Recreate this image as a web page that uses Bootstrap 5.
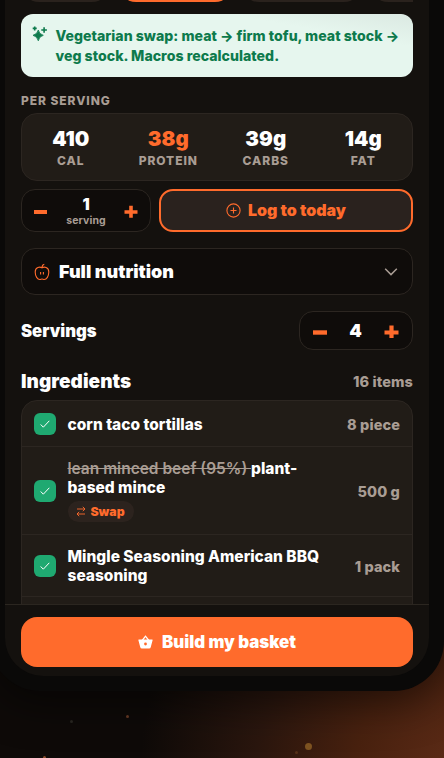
<!DOCTYPE html>
<html lang="en">
<head>
<meta charset="utf-8">
<meta name="viewport" content="width=device-width, initial-scale=1">
<title>Recipe</title>
<link href="https://cdn.jsdelivr.net/npm/bootstrap@5.3.0/dist/css/bootstrap.min.css" rel="stylesheet">
<style>
:root{--acc:#ff6b2c;--line:#2c2621;--mut:#a99d94}
body{font-family:Inter,sans-serif;height:758px;color:#fff;line-height:1.2;
background:radial-gradient(circle 330px at 470px 775px,#602d18 0,#48210f 35%,#2a160e 65%,rgba(14,10,8,0) 100%),#0e0a08}
.phone{width:454px;height:691px;margin-left:-10px;padding:0 15px 15px;background:#0a0908;border-radius:0 0 50px 50px;box-shadow:0 12px 40px rgba(0,0,0,.5)}
.screen{height:676px;background:#14110e;border-radius:0 0 38px 38px}
.scroller{height:604px;padding:0 16px}
.chips{height:13.5px;gap:8px}
.chip{height:20px;margin-top:-18px;border-radius:0 0 18px 18px;background:#2a221d;flex:none}
.chip.on{background:var(--acc)}
.note{height:63.5px;border-radius:12px;background:linear-gradient(190deg,#dbe9e2 0,#e6f6ee 25%);color:#0d7a4c;font-size:14.100px;font-weight:800;line-height:20px;padding:12px 8px 0 11px;gap:7.5px;letter-spacing:.03px}
.cap{font-size:12px;font-weight:800;letter-spacing:.93px;color:var(--mut);line-height:15px}
.panel{background:#211c17;border:1px solid var(--line);border-radius:16px}
.well{background:#0f0c0a;border:1px solid var(--line);border-radius:14px}
.macros{height:68px}
.macros .num{font-size:20.500px;font-weight:900;line-height:24px;margin-bottom:2px;padding-top:0}
.acc{color:var(--acc)}
.actions{height:43px;margin-top:8px;gap:8px}
.per{width:130px;padding:0 12px}
.per .q{font-size:16px;font-weight:900;line-height:17px;padding-top:2px}
.per .u{font-size:10.500px;font-weight:700;line-height:14px;letter-spacing:.1px;color:var(--mut);padding-top:1px}
.log{border:2px solid var(--acc);border-radius:14px;background:#2a221e;color:var(--acc);font-size:16px;font-weight:900;gap:7px}
.log span{margin-top:-1px}
.full{height:47px;margin-top:16px;padding:0 14px 0 11px;font-size:18px;font-weight:900}
.srv{height:39px;margin-top:16px;font-size:16.700px;font-weight:900}
.srv>span{padding-top:1px}
.step{width:114px;height:39px;padding:0 13px;font-size:18px}
.ing{height:24px;margin-top:19.5px}
.ing h2{font-size:19px;font-weight:900;line-height:24px;letter-spacing:.05px}
.amt{font-size:14.500px;font-weight:800;letter-spacing:.1px;color:var(--mut)}
.item .amt{padding-top:1px}
.items{height:230px;margin-top:6.5px;border-radius:16px 16px 0 0}
.item{border-bottom:1px solid var(--line);padding:0 12px 0 11.5px;font-size:15.500px;font-weight:800;line-height:19px}
.h-a{height:46px;padding-top:1px}.h-b{height:87.5px;padding-top:1px}.h-c{height:62px;padding-top:1px}
.tick{width:22px;height:22px;border-radius:6px;background:#1fa971;flex:none;margin-right:12px}
.name{width:260px}
.old{text-decoration:line-through;font-weight:600;color:var(--mut)}
.swap{height:21px;width:66px;border-radius:11px;background:#2c231e;color:var(--acc);font-size:12.300px;font-weight:900;margin-top:4px;gap:4px}
.foot{height:72px;border-top:1px solid #2b2620;padding:12px 16px 0}
.build{height:50px;border-radius:16px;background:var(--acc);color:#fff;font-size:16.900px;font-weight:900;gap:9px}
.build span{padding-top:1px}
svg{flex:none;display:block}
.dust{position:absolute;border-radius:50%}
</style>
<script src="https://cdn.jsdelivr.net/npm/bootstrap@5.3.0/dist/js/bootstrap.bundle.min.js"></script>
</head>
<body class="overflow-hidden position-relative">
<div class="phone">
<div class="screen overflow-hidden">
<main class="scroller overflow-hidden">
<div class="chips d-flex overflow-hidden"><div class="chip" style="width:89px"></div><div class="chip on" style="width:115px"></div><div class="chip" style="width:121px"></div><div class="chip" style="width:80px"></div></div>
<div class="note d-flex">
<svg width="16" height="16" viewBox="0 0 16 16" fill="#0d7a4c" stroke="#0d7a4c"><path stroke-width=".8" d="M6.300 4Q7.100 8.200 11.300 9.300Q7.100 10.400 6.300 14.800Q5.300 10.400 1 9.300Q5.300 8.200 6.300 4Z"/><path d="M12.100 1.200v5.600M9.300 4h5.600M2.700.4v4M.7 2.400h4" stroke-width="1.600"/></svg>
<div class="note-text text-nowrap">Vegetarian swap: meat → firm tofu, meat stock →<br>veg stock. Macros recalculated.</div>
</div>
<div class="cap" style="margin:16px 0 5px">PER SERVING</div>
<div class="panel macros d-flex text-center align-items-center px-0">
<div class="col"><div class="num">410</div><div class="cap">CAL</div></div>
<div class="col"><div class="num acc">38g</div><div class="cap">PROTEIN</div></div>
<div class="col"><div class="num">39g</div><div class="cap">CARBS</div></div>
<div class="col"><div class="num">14g</div><div class="cap">FAT</div></div>
</div>
<div class="actions d-flex">
<div class="well per d-flex align-items-center justify-content-between">
<svg width="14" height="14" viewBox="0 0 14 14"><path d="M0 8h13" stroke="#ff6b2c" stroke-width="4"/></svg>
<div class="text-center"><div class="q">1</div><div class="u">serving</div></div>
<svg width="14" height="14" viewBox="0 0 14 14"><path d="M.5 8h13M7 1.800v12" stroke="#ff6b2c" stroke-width="3.600"/></svg>
</div>
<button class="btn log flex-fill d-flex align-items-center justify-content-center p-0"><svg width="15" height="15" viewBox="0 0 15 15" fill="none" stroke="#ff6b2c" stroke-width="1.100"><circle cx="7.500" cy="7.500" r="6.600"/><path d="M7.500 4.500v6M4.500 7.500h6"/></svg><span>Log to today</span></button>
</div>
<div class="well full d-flex align-items-center">
<svg class="me-2" width="18" height="18" viewBox="-.5 0 18 18" fill="none" stroke="#ff6b2c" stroke-width="1.100"><path d="M8.500 4.800C6.500 3.600 1.700 3.600 1.700 9c0 4.300 2.300 7.500 4.600 7.500 1 0 1.300-.5 2.200-.5s1.200.5 2.200.5c2.300 0 4.600-3.200 4.600-7.500 0-5.400-4.800-5.400-6.800-4.200zM8.500 4.800c0-1.800.8-3.200 2.300-3.500"/><path d="M7.100 9v2.600M9.900 9v2.600"/></svg>
<span class="full-t">Full nutrition</span>
<svg class="ms-auto" width="14" height="14" viewBox="0 0 14 14" fill="none" stroke="#a99d94" stroke-width="1.500"><path d="M1.200 3.800 7 9.600l5.800-5.800"/></svg>
</div>
<div class="srv d-flex align-items-center justify-content-between"><span>Servings</span>
<div class="well step d-flex align-items-center justify-content-between">
<svg width="14" height="14" viewBox="0 0 14 14"><path d="M0 8.500h14" stroke="#ff6b2c" stroke-width="4.400"/></svg>
<span>4</span>
<svg width="15" height="14" viewBox="0 0 15 14"><path d="M.5 8.500h14M7.500 1.500v12.500" stroke="#ff6b2c" stroke-width="4.200"/></svg>
</div></div>
<div class="ing d-flex align-items-center justify-content-between"><h2 class="m-0">Ingredients</h2><span class="amt">16 items</span></div>
<div class="panel items">
<div class="item h-a d-flex align-items-center"><div class="tick d-flex align-items-center justify-content-center"><svg width="10" height="10" viewBox="0 0 10 10" fill="none" stroke="#fff"><path d="M.7 5.500 3.300 8.200 9.300 1.800"/></svg></div><div class="name">corn taco tortillas</div><span class="amt ms-auto">8 piece</span></div>
<div class="item h-b d-flex align-items-center"><div class="tick d-flex align-items-center justify-content-center"><svg width="10" height="10" viewBox="0 0 10 10" fill="none" stroke="#fff"><path d="M.7 5.500 3.300 8.200 9.300 1.800"/></svg></div><div class="name"><span class="old">lean minced beef (95%) </span>plant-<br>based mince<div class="swap d-flex align-items-center justify-content-center"><svg width="10" height="11" viewBox="0 0 10 11" fill="none" stroke="#ff6b2c" stroke-width=".9"><path d="M1 3h8M6.800.8 9 3 6.800 5.200M9 8H1M3.200 5.800 1 8l2.200 2.200"/></svg>Swap</div></div><span class="amt ms-auto">500 g</span></div>
<div class="item h-c d-flex align-items-center"><div class="tick d-flex align-items-center justify-content-center"><svg width="10" height="10" viewBox="0 0 10 10" fill="none" stroke="#fff"><path d="M.7 5.500 3.300 8.200 9.300 1.800"/></svg></div><div class="name">Mingle Seasoning American BBQ<br>seasoning</div><span class="amt ms-auto">1 pack</span></div>
</div>
</main>
<div class="foot"><button class="btn build w-100 d-flex align-items-center justify-content-center p-0"><svg width="15" height="14" viewBox="0 0 15 14"><path d="M4.200 5.500 7.500 1.200l3.300 4.300" fill="none" stroke="#fff" stroke-width="1.300"/><path d="M.8 4.600h13.400q.6 0 .4.700L12.800 12q-.3 1.500-1.700 1.500H3.900q-1.400 0-1.700-1.500L.4 5.300q-.2-.7.400-.7z" fill="#fff"/><circle cx="7.500" cy="9" r="1.400" fill="#ff6b2c"/></svg><span>Build my basket</span></button></div>
</div>
</div>
<i class="dust" style="left:305px;top:743px;width:7px;height:7px;background:#7d5220"></i>
<i class="dust" style="left:126px;top:715px;width:3px;height:3px;background:#5b3320"></i>
<i class="dust" style="left:70px;top:720px;width:3px;height:3px;background:#25231e"></i>
<i class="dust" style="left:43px;top:756px;width:3px;height:3px;background:#8a4c2b"></i>
<i class="dust" style="left:295px;top:751px;width:3px;height:3px;background:#553018"></i>
</body>
</html>
